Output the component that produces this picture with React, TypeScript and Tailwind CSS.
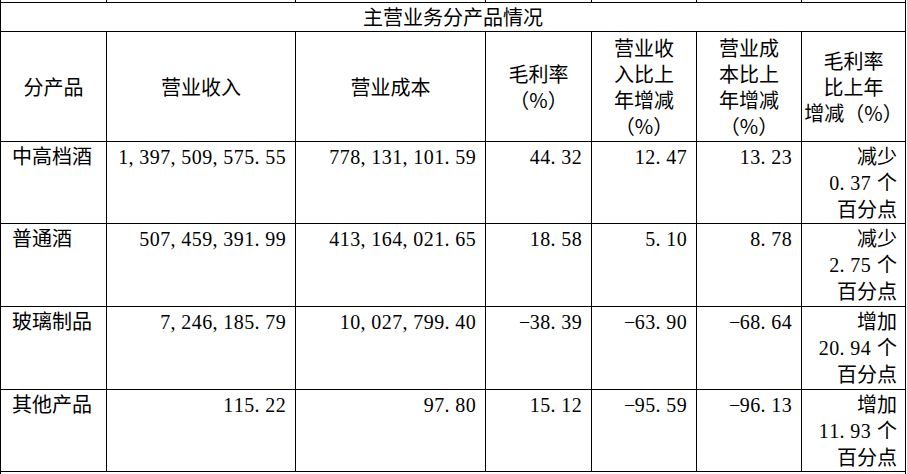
import React from "react";

const CJK = "font-['Noto_Sans_CJK_SC',sans-serif]";

function Num({ v }: { v: string }) {
  return (
    <span className="inline-flex font-['Liberation_Serif',serif] text-[20px]">
      {v.split("").map((c, i) => {
        const punct = c === "," || c === ".";
        const ch = c === "-" ? "\u2212" : c;
        return (
          <span
            key={i}
            className={
              punct
                ? "inline-block w-[10.5px] text-left"
                : c === " "
                ? "inline-block w-[10.5px]"
                : "inline-block w-[10.5px] text-center"
            }
          >
            {ch}
          </span>
        );
      })}
    </span>
  );
}

type Row = {
  name: string;
  rev: string;
  cost: string;
  gm: string;
  revChg: string;
  costChg: string;
  dir: string;
  pts: string;
};

const rows: Row[] = [
  { name: "中高档酒", rev: "1,397,509,575.55", cost: "778,131,101.59", gm: "44.32", revChg: "12.47", costChg: "13.23", dir: "减少", pts: "0.37" },
  { name: "普通酒", rev: "507,459,391.99", cost: "413,164,021.65", gm: "18.58", revChg: "5.10", costChg: "8.78", dir: "减少", pts: "2.75" },
  { name: "玻璃制品", rev: "7,246,185.79", cost: "10,027,799.40", gm: "-38.39", revChg: "-63.90", costChg: "-68.64", dir: "增加", pts: "20.94" },
  { name: "其他产品", rev: "115.22", cost: "97.80", gm: "15.12", revChg: "-95.59", costChg: "-96.13", dir: "增加", pts: "11.93" },
];

function Header({ lines }: { lines: string[] }) {
  return (
    <div className="bg-white flex flex-col items-center justify-center text-center leading-[26px]">
      {lines.map((l, i) => (
        <div key={i}>{l}</div>
      ))}
    </div>
  );
}

function NumCell({ v }: { v: string }) {
  return (
    <div className="bg-white pt-px pr-[9px] text-right leading-[26px]">
      <Num v={v} />
    </div>
  );
}

export default function App() {
  return (
    <div className={`w-[907px] h-[474px] overflow-hidden bg-white text-black text-[20px] ${CJK}`}>
      <div className="grid w-[906px] bg-black px-px gap-px grid-cols-[105px_188px_189px_105px_104px_104px_103px] grid-rows-[2px_28px_109px_81px_82px_82px_81px_12px]">
        {Array.from({ length: 7 }).map((_, i) => (
          <div key={"p" + i} className="bg-white" />
        ))}
        <div className="col-span-7 bg-white flex items-center justify-center leading-[26px]">
          主营业务分产品情况
        </div>
        <Header lines={["分产品"]} />
        <Header lines={["营业收入"]} />
        <Header lines={["营业成本"]} />
        <Header lines={["毛利率", "（%）"]} />
        <Header lines={["营业收", "入比上", "年增减", "（%）"]} />
        <Header lines={["营业成", "本比上", "年增减", "（%）"]} />
        <Header lines={["毛利率", "比上年", "增减（%）"]} />
        {rows.map((r) => (
          <React.Fragment key={r.name}>
            <div className="bg-white pt-px pl-[11px] leading-[26px]">{r.name}</div>
            <NumCell v={r.rev} />
            <NumCell v={r.cost} />
            <NumCell v={r.gm} />
            <NumCell v={r.revChg} />
            <NumCell v={r.costChg} />
            <div className="bg-white pt-px pr-[8px] text-right leading-[26px]">
              <div>{r.dir}</div>
              <div>
                <Num v={r.pts} />
                <span className="inline-block w-[6px]" />个
              </div>
              <div>百分点</div>
            </div>
          </React.Fragment>
        ))}
        <div className="col-span-7 bg-white" />
      </div>
    </div>
  );
}
